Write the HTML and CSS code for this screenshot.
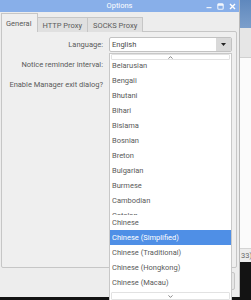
FILE: index.html
```html
<!DOCTYPE html>
<html lang="en">
<head>
    <meta charset="UTF-8">
    <title>Options</title>
    <link rel="stylesheet" href="styles.css">
</head>
<body>
    <div class="screen">
        <div class="window">
            <div class="titlebar">
                <span></span>
                <span class="title">Options</span>
                <div class="controls">
                    <svg width="6" height="6" viewBox="0 0 6 6"><rect x="0.5" y="4" width="5" height="1.2" fill="#fff" opacity="0.85"/></svg>
                    <svg width="7" height="7" viewBox="0 0 7 7"><rect x="0.8" y="0.8" width="5.4" height="5.4" rx="1" fill="none" stroke="#fff" stroke-width="1.1" opacity="0.85"/><rect x="0.8" y="0.8" width="5.4" height="2" fill="#fff" opacity="0.85"/></svg>
                    <svg width="7" height="7" viewBox="0 0 7 7"><path d="M1 1 L6 6 M6 1 L1 6" stroke="#fff" stroke-width="1.4"/></svg>
                </div>
            </div>

            <div class="window-body">
                <div class="tabs">
                    <div class="tab active">General</div>
                    <div class="tab">HTTP Proxy</div>
                    <div class="tab">SOCKS Proxy</div>
                </div>

                <div class="pane">
                    <div class="form">
                        <label>Language:</label>
                        <div class="combo">
                            <span class="combo-text">English</span>
                            <span class="combo-button">
                                <svg width="5" height="3" viewBox="0 0 5 3"><path d="M0 0 H5 L2.5 3 Z" fill="#222"/></svg>
                            </span>
                        </div>
                        <label>Notice reminder interval:</label>
                        <div class="spin"></div>
                        <label>Enable Manager exit dialog?</label>
                        <div class="check"></div>
                    </div>
                </div>

                <div class="footer">
                    <button class="btn">OK</button>
                </div>
            </div>

            <!-- open language list of the combo box -->
            <div class="popup">
                <div class="scroll-arrow">
                    <svg width="5" height="3" viewBox="0 0 5 3"><path d="M0.5 2.6 L2.5 0.6 L4.5 2.6" fill="none" stroke="#666" stroke-width="0.8"/></svg>
                </div>
                <div class="list">
                    <div class="list-inner">
                        <div class="item">Belarusian</div>
                        <div class="item">Bengali</div>
                        <div class="item">Bhutani</div>
                        <div class="item">Bihari</div>
                        <div class="item">Bislama</div>
                        <div class="item">Bosnian</div>
                        <div class="item">Breton</div>
                        <div class="item">Bulgarian</div>
                        <div class="item">Burmese</div>
                        <div class="item">Cambodian</div>
                        <div class="item cut"><span>Catalan</span></div>
                        <div class="item">Chinese</div>
                        <div class="item selected">Chinese (Simplified)</div>
                        <div class="item">Chinese (Traditional)</div>
                        <div class="item">Chinese (Hongkong)</div>
                        <div class="item">Chinese (Macau)</div>
                    </div>
                </div>
                <div class="scroll-arrow">
                    <svg width="5" height="3" viewBox="0 0 5 3"><path d="M0.5 0.4 L2.5 2.4 L4.5 0.4" fill="none" stroke="#666" stroke-width="0.8"/></svg>
                </div>
            </div>
        </div>

        <div class="desktop">
            <div class="wallpaper"></div>
            <div class="other-head"></div>
            <div class="other-body"></div>
            <div class="other-status">33)</div>
            <div class="terminal"></div>
        </div>
    </div>
</body>
</html>
```

FILE: styles.css
```css
/* colours of the desktop theme */
:root {
    --title-blue: #88afe9;
    --window-bg: #ededed;
    --pane-bg: #efefef;
    --border: #c6c6c6;
    --text: #5a5a5a;
    --select: #4f8fe6;
}

body {
    margin: 0;
    width: 251px;
    height: 300px;
    overflow: hidden;
    background-color: #131313;
    font-family: 'Roboto', 'Liberation Sans', sans-serif;
    font-size: 7.5px;
    color: var(--text);
}

.screen {
    display: flex;
    height: 300px;
}

.window {
    position: relative;
    width: 240px;
    height: 297px;
    flex-shrink: 0;
    display: flex;
    flex-direction: column;
    background-color: var(--window-bg);
    border-right: 1px solid #b9b9b9;
    box-sizing: border-box;
}

.titlebar {
    height: 12px;
    display: grid;
    grid-template-columns: 1fr auto 1fr;
    align-items: center;
    background-color: var(--title-blue);
    color: #fff;
}

.title {
    font-size: 7.5px;
    line-height: 12px;
}

.controls {
    justify-self: end;
    display: flex;
    align-items: center;
    gap: 5px;
    padding-right: 3px;
}

.controls svg {
    display: block;
}

.window-body {
    flex: 1;
    display: flex;
    flex-direction: column;
}

.tabs {
    display: flex;
    align-items: flex-end;
    height: 19px;
    padding-left: 1px;
}

.tab {
    height: 15px;
    line-height: 15px;
    padding: 0 5px;
    background-color: #e0e0e0;
    border: 1px solid var(--border);
    border-bottom: none;
    box-sizing: border-box;
    margin-bottom: -1px;
    margin-left: -1px;
    position: relative;
}

.tab:first-child {
    margin-left: 0;
}

.tab.active {
    height: 19px;
    line-height: 19px;
    background-color: var(--pane-bg);
    z-index: 1;
    padding: 0 5px 0 4px;
}

.pane {
    height: 237px;
    margin-left: 1px;
    width: 236px;
    box-sizing: border-box;
    border: 1px solid var(--border);
    background-color: var(--pane-bg);
    border-radius: 0 2px 2px 2px;
}

.form {
    display: grid;
    grid-template-columns: 101px 123px;
    grid-auto-rows: 15px;
    column-gap: 6px;
    row-gap: 5px;
    padding-top: 5px;
    align-items: center;
}

.form label {
    text-align: right;
    white-space: nowrap;
}

.combo {
    height: 15px;
    display: flex;
    background-color: #fff;
    border: 1px solid #c2c2c2;
    border-radius: 2px;
    box-sizing: border-box;
    overflow: hidden;
}

.combo-text {
    flex: 1;
    padding-left: 2px;
    line-height: 13px;
    color: #4a4a4a;
}

.combo-button {
    width: 15px;
    display: flex;
    justify-content: center;
    align-items: center;
    background-color: #d9d9d9;
}

.spin,
.check {
    height: 13px;
}

.footer {
    flex: 1;
    display: flex;
    justify-content: flex-end;
    align-items: flex-start;
    padding: 4px 4px 0 0;
}

.btn {
    width: 55px;
    height: 18px;
    font-family: inherit;
    font-size: 7.5px;
    color: var(--text);
    background-color: #e6e6e6;
    border: 1px solid var(--border);
    border-radius: 2px;
}

/* dropdown list lies over the dialog */
.popup {
    position: absolute;
    left: 109px;
    top: 53px;
    width: 123px;
    height: 250px;
    box-sizing: border-box;
    background-color: #fff;
    border: 1px solid #c8c8c8;
    display: flex;
    flex-direction: column;
}

.scroll-arrow {
    height: 6px;
    margin: 0 1px;
    border: 1px solid #e2e2e2;
    border-radius: 1px;
    box-sizing: border-box;
    display: flex;
    justify-content: center;
    align-items: center;
}

.scroll-arrow:last-child {
    height: 8px;
}

.list {
    height: 232px;
    overflow: hidden;
}

.list-inner {
    margin-top: -2px;
}

.item {
    height: 15px;
    line-height: 15px;
    padding-left: 2px;
    white-space: nowrap;
    overflow: hidden;
}

.item.cut {
    height: 7px;
    line-height: 7px;
}

.item.cut span {
    display: block;
    height: 7px;
    line-height: 15px;
    overflow: hidden;
}

.item.selected {
    background-color: var(--select);
    color: #fff;
}

.desktop {
    flex: 1;
    display: flex;
    flex-direction: column;
    overflow: hidden;
}

.wallpaper {
    height: 28px;
    background: linear-gradient(180deg, #5f88bd, #7c9fcb);
}

.other-head {
    height: 30px;
    box-sizing: border-box;
    background-color: #e6e6e6;
    border-bottom: 1px solid #d0d0d0;
}

.other-body {
    height: 190px;
    background-color: #fbfbfb;
}

.other-status {
    height: 14px;
    line-height: 14px;
    box-sizing: border-box;
    border-top: 1px solid #d4d4d4;
    background-color: #ececec;
    padding-left: 1px;
    color: #666;
    white-space: nowrap;
}

.terminal {
    flex: 1;
    background-color: #131313;
}
```
